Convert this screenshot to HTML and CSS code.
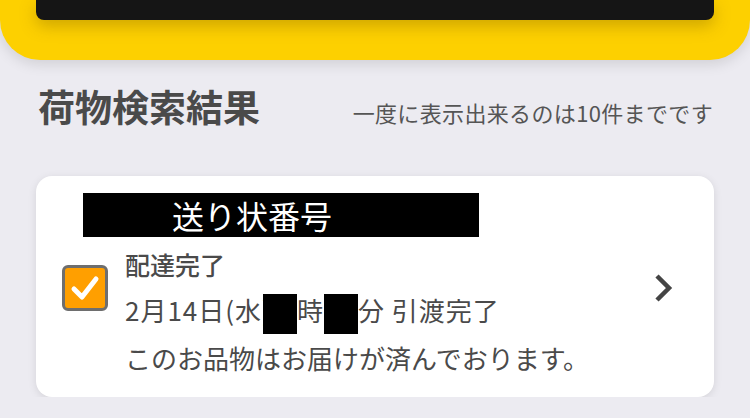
FILE: index.html
```html
<!DOCTYPE html>
<html lang="ja">
<head>
    <meta charset="UTF-8">
    <meta name="viewport" content="width=device-width, initial-scale=1.0">
    <title>荷物検索結果</title>
    <link rel="stylesheet" href="styles.css">
</head>
<body>
    <div class="search-panel">
        <div class="search-bar"></div>
    </div>

    <div class="result-head">
        <h1>荷物検索結果</h1>
        <span class="result-note">一度に表示出来るのは10件までです</span>
    </div>

    <div class="card">
        <div class="slip-number">送り状番号</div>
        <div class="card-body">
            <span class="check">
                <svg width="40" height="40" viewBox="0 0 40 40">
                    <path d="M9 21 L17 29 L31 11" fill="none" stroke="#fff" stroke-width="5" stroke-linecap="round" stroke-linejoin="round"/>
                </svg>
            </span>
            <div class="status">
                <div class="status-title">配達完了</div>
                <div class="status-line time">2月14日(水)<span class="mask first"></span>時<span class="mask"></span>分 引渡完了</div>
                <div class="status-line">このお品物はお届けが済んでおります。</div>
            </div>
            <svg class="chevron" width="24" height="32" viewBox="0 0 24 32">
                <path d="M5 4 L17 16 L5 28" fill="none" stroke="#444" stroke-width="4.5"/>
            </svg>
        </div>
    </div>
</body>
</html>
```

FILE: styles.css
```css
body {
    margin: 0;
    padding: 0;
    background-color: #ecebf1;
    font-family: "Noto Sans CJK JP", "Noto Sans", sans-serif;
    color: #4a4a4a;
}

/* Bandeau jaune du haut */
.search-panel {
    height: 60px;
    background-color: #fdd000;
    border-radius: 0 0 40px 40px;
    padding: 0 36px;
    box-shadow: 0 4px 14px rgba(0, 0, 0, 0.12);
}

.search-bar {
    height: 20px;
    background-color: #151515;
    border-radius: 0 0 8px 8px;
    box-shadow: 0 6px 16px rgba(120, 90, 0, 0.35);
}

.result-head {
    display: flex;
    justify-content: space-between;
    align-items: baseline;
    padding: 0 37px 0 38px;
    margin-top: 18px;
}

h1 {
    margin: 0;
    font-size: 37px;
    font-weight: bold;
    line-height: 56px;
}

.result-note {
    font-size: 22px;
    letter-spacing: 0.35px;
    color: #555;
}

.card {
    margin: 42px 36px 0;
    background: white;
    border-radius: 16px;
    box-shadow: 0 2px 8px rgba(0, 0, 0, 0.1);
    padding: 17px 0 15px;
}

.slip-number {
    margin-left: 47px;
    width: 307px;
    height: 44px;
    padding-left: 89px;
    background: black;
    color: white;
    font-size: 32px;
    line-height: 44px;
}

.card-body {
    display: flex;
    align-items: flex-start;
    padding: 5px 38px 0 26px;
}

.check {
    width: 40px;
    height: 40px;
    border: 3px solid #6e6e6e;
    border-radius: 6px;
    background-color: #ff9f00;
    margin: 23px 17px 0 0;
    flex-shrink: 0;
}

.check svg {
    display: block;
}

.status {
    flex: 1;
    font-size: 26px;
    line-height: 48px;
}

.status-title {
    font-size: 25px;
    font-weight: 500;
    line-height: 44px;
}

.status-line.time {
    letter-spacing: 1px;
}

.mask {
    display: inline-block;
    width: 34px;
    height: 40px;
    background: black;
    vertical-align: middle;
}

.mask.first {
    margin-left: -9px;
}

.chevron {
    flex-shrink: 0;
    margin-top: 30px;
}
```
